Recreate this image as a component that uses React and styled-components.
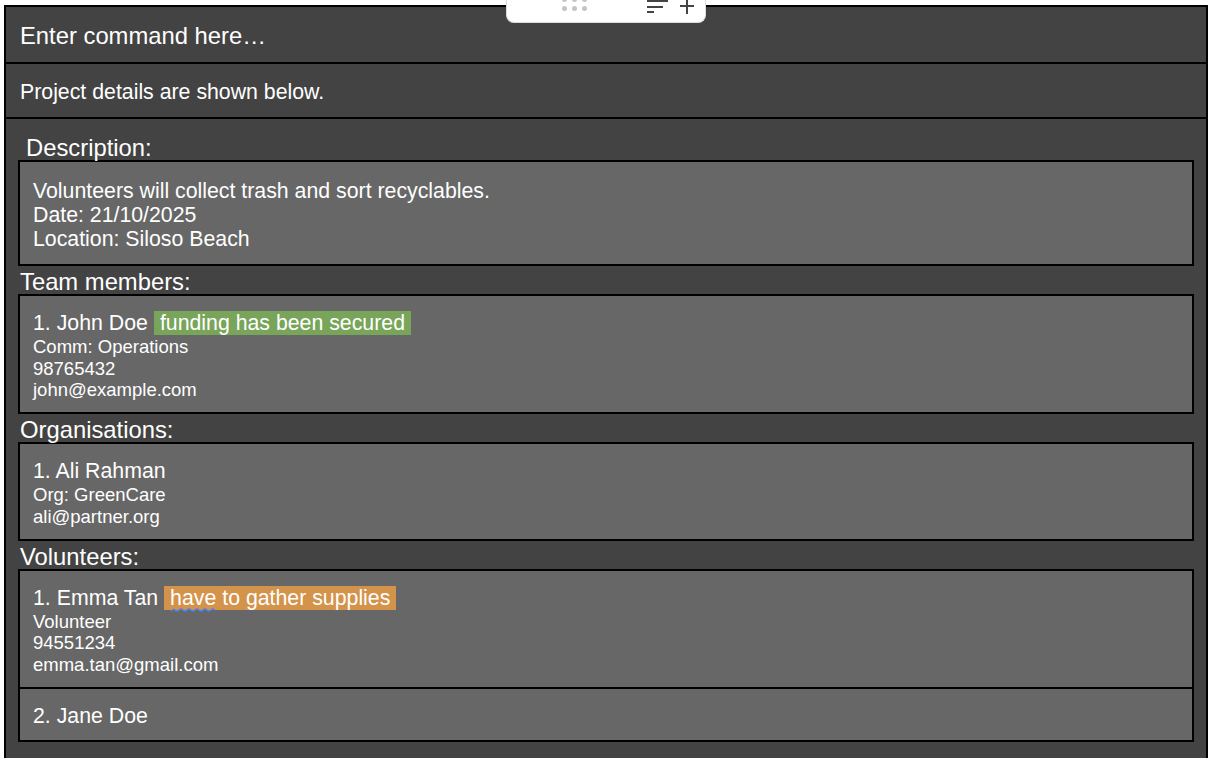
import React from "react";
import styled, { createGlobalStyle } from "styled-components";

const GlobalStyle = createGlobalStyle`
  html, body {
    margin: 0;
    padding: 0;
    background: #ffffff;
    height: 100%;
    overflow: hidden;
  }
  body {
    font-family: "Liberation Sans", Arial, sans-serif;
  }
`;

const project = {
  description: [
    "Volunteers will collect trash and sort recyclables.",
    "Date: 21/10/2025",
    "Location: Siloso Beach",
  ],
  teamMembers: [
    {
      name: "John Doe",
      tag: { text: "funding has been secured", tone: "green" },
      lines: ["Comm: Operations", "98765432", "john@example.com"],
    },
  ],
  organisations: [
    { name: "Ali Rahman", lines: ["Org: GreenCare", "ali@partner.org"] },
  ],
  volunteers: [
    {
      name: "Emma Tan",
      tag: { text: "have to gather supplies", tone: "orange", misspelt: "have" },
      lines: ["Volunteer", "94551234", "emma.tan@gmail.com"],
    },
    { name: "Jane Doe", lines: [] },
  ],
};

// wavy spell-check underline
const wave = (() => {
  let d = "M0 4";
  for (let x = 0; x < 44; x += 8) {
    d += ` Q${x + 2} 0 ${x + 4} 2 T${x + 8} 2`;
  }
  return d;
})();

const App = () => {
  return (
    <>
      <GlobalStyle />
      <Page>
        <Toolbar>
          <DragDots>
            {Array.from({ length: 6 }).map((_, i) => (
              <Dot key={i} />
            ))}
          </DragDots>
          <ToolIcons>
            <svg width="24" height="14" viewBox="0 0 24 14">
              <rect x="2" y="0" width="21" height="2" fill="#444" />
              <rect x="2" y="6" width="16" height="2" fill="#444" />
              <rect x="2" y="11" width="7" height="2" fill="#444" />
            </svg>
            <svg width="16" height="14" viewBox="0 0 16 14">
              <rect x="7" y="0" width="2" height="14" fill="#444" />
              <rect x="1" y="5" width="14" height="2" fill="#444" />
            </svg>
          </ToolIcons>
        </Toolbar>
        <Frame>
          <CommandBox>Enter command here…</CommandBox>
          <ResultBox>Project details are shown below.</ResultBox>
          <DetailPanel>
            <SectionTitle $indent>Description:</SectionTitle>
            <Card>
              <Item $desc>
                {project.description.map((line, i) => (
                  <MainLine key={i} $desc>
                    {line}
                  </MainLine>
                ))}
              </Item>
            </Card>

            <SectionTitle>Team members:</SectionTitle>
            <PersonList people={project.teamMembers} />

            <SectionTitle>Organisations:</SectionTitle>
            <PersonList people={project.organisations} />

            <SectionTitle>Volunteers:</SectionTitle>
            <PersonList people={project.volunteers} />
          </DetailPanel>
        </Frame>
      </Page>
    </>
  );
};

const PersonList = ({ people }) => (
  <Card>
    {people.map((p, i) => (
      <Item key={i}>
        <MainLine>
          {i + 1}. {p.name}
          {p.tag && (
            <Tag $tone={p.tag.tone}>
              {p.tag.misspelt ? (
                <>
                  <Misspelt>
                    {p.tag.misspelt}
                    <svg width="44" height="5" viewBox="0 0 44 5">
                      <path d={wave} fill="none" stroke="#4f7ff2" strokeWidth="1.3" />
                    </svg>
                  </Misspelt>
                  {p.tag.text.slice(p.tag.misspelt.length)}
                </>
              ) : (
                p.tag.text
              )}
            </Tag>
          )}
        </MainLine>
        {p.lines.map((line, j) => (
          <SubLine key={j}>{line}</SubLine>
        ))}
      </Item>
    ))}
  </Card>
);

const Page = styled.div`
  position: relative;
  height: 100vh;
  padding: 5px 2px 0 4px;
  box-sizing: border-box;
  overflow: hidden;
`;

const Frame = styled.div`
  border: 2px solid #000;
  border-bottom: none;
  background: #434343;
  height: 100%;
  box-sizing: border-box;
  display: flex;
  flex-direction: column;
`;

const CommandBox = styled.div`
  height: 57px;
  flex-shrink: 0;
  box-sizing: border-box;
  padding: 3px 0 0 14px;
  display: flex;
  align-items: center;
  color: #fff;
  font-size: 23.8px;
  border-bottom: 2px solid #000;
`;

const ResultBox = styled.div`
  height: 55px;
  flex-shrink: 0;
  box-sizing: border-box;
  padding: 3px 0 0 14px;
  display: flex;
  align-items: center;
  color: #fff;
  font-size: 21.3px;
  border-bottom: 2px solid #000;
`;

const DetailPanel = styled.div`
  flex: 1;
  padding: 13px 12px 0 12px;
  color: #fff;
`;

const SectionTitle = styled.div`
  height: 28px;
  box-sizing: border-box;
  padding-top: 3px;
  line-height: 25px;
  font-size: 23.8px;
  padding-left: ${(p) => (p.$indent ? "8px" : "2px")};
  white-space: nowrap;
`;

const Card = styled.div`
  border: 2px solid #000;
  background: #676767;
  & > * + * {
    border-top: 2px solid #000;
  }
`;

const Item = styled.div`
  padding: ${(p) => (p.$desc ? "17px 13px 13px" : "15px 13px 11px")};
`;

const MainLine = styled.div`
  font-size: 21.3px;
  line-height: ${(p) => (p.$desc ? "24px" : "25px")};
  white-space: nowrap;
`;

const SubLine = styled.div`
  font-size: 18.5px;
  line-height: 21.7px;
  white-space: nowrap;
`;

const Tag = styled.span`
  margin-left: 6px;
  padding: 0 6px;
  background: ${(p) => (p.$tone === "green" ? "#78a55a" : "#d4934b")};
  color: #fff;
`;

const Misspelt = styled.span`
  position: relative;
  svg {
    position: absolute;
    left: 1px;
    bottom: -3px;
  }
`;

const Toolbar = styled.div`
  position: absolute;
  top: -1px;
  left: 506px;
  width: 200px;
  height: 24px;
  background: #fff;
  border: 1px solid #dcdcdc;
  border-top: none;
  border-radius: 0 0 8px 8px;
  box-sizing: border-box;
  z-index: 2;
`;

const DragDots = styled.div`
  position: absolute;
  left: 55px;
  top: -2px;
  display: grid;
  grid-template-columns: repeat(3, 5px);
  column-gap: 5px;
  row-gap: 4px;
`;

const Dot = styled.span`
  width: 5px;
  height: 5px;
  border-radius: 50%;
  background: #c4c4c4;
`;

const ToolIcons = styled.div`
  position: absolute;
  left: 138px;
  top: 1px;
  display: flex;
  gap: 10px;
  align-items: flex-start;
`;

export default App;
